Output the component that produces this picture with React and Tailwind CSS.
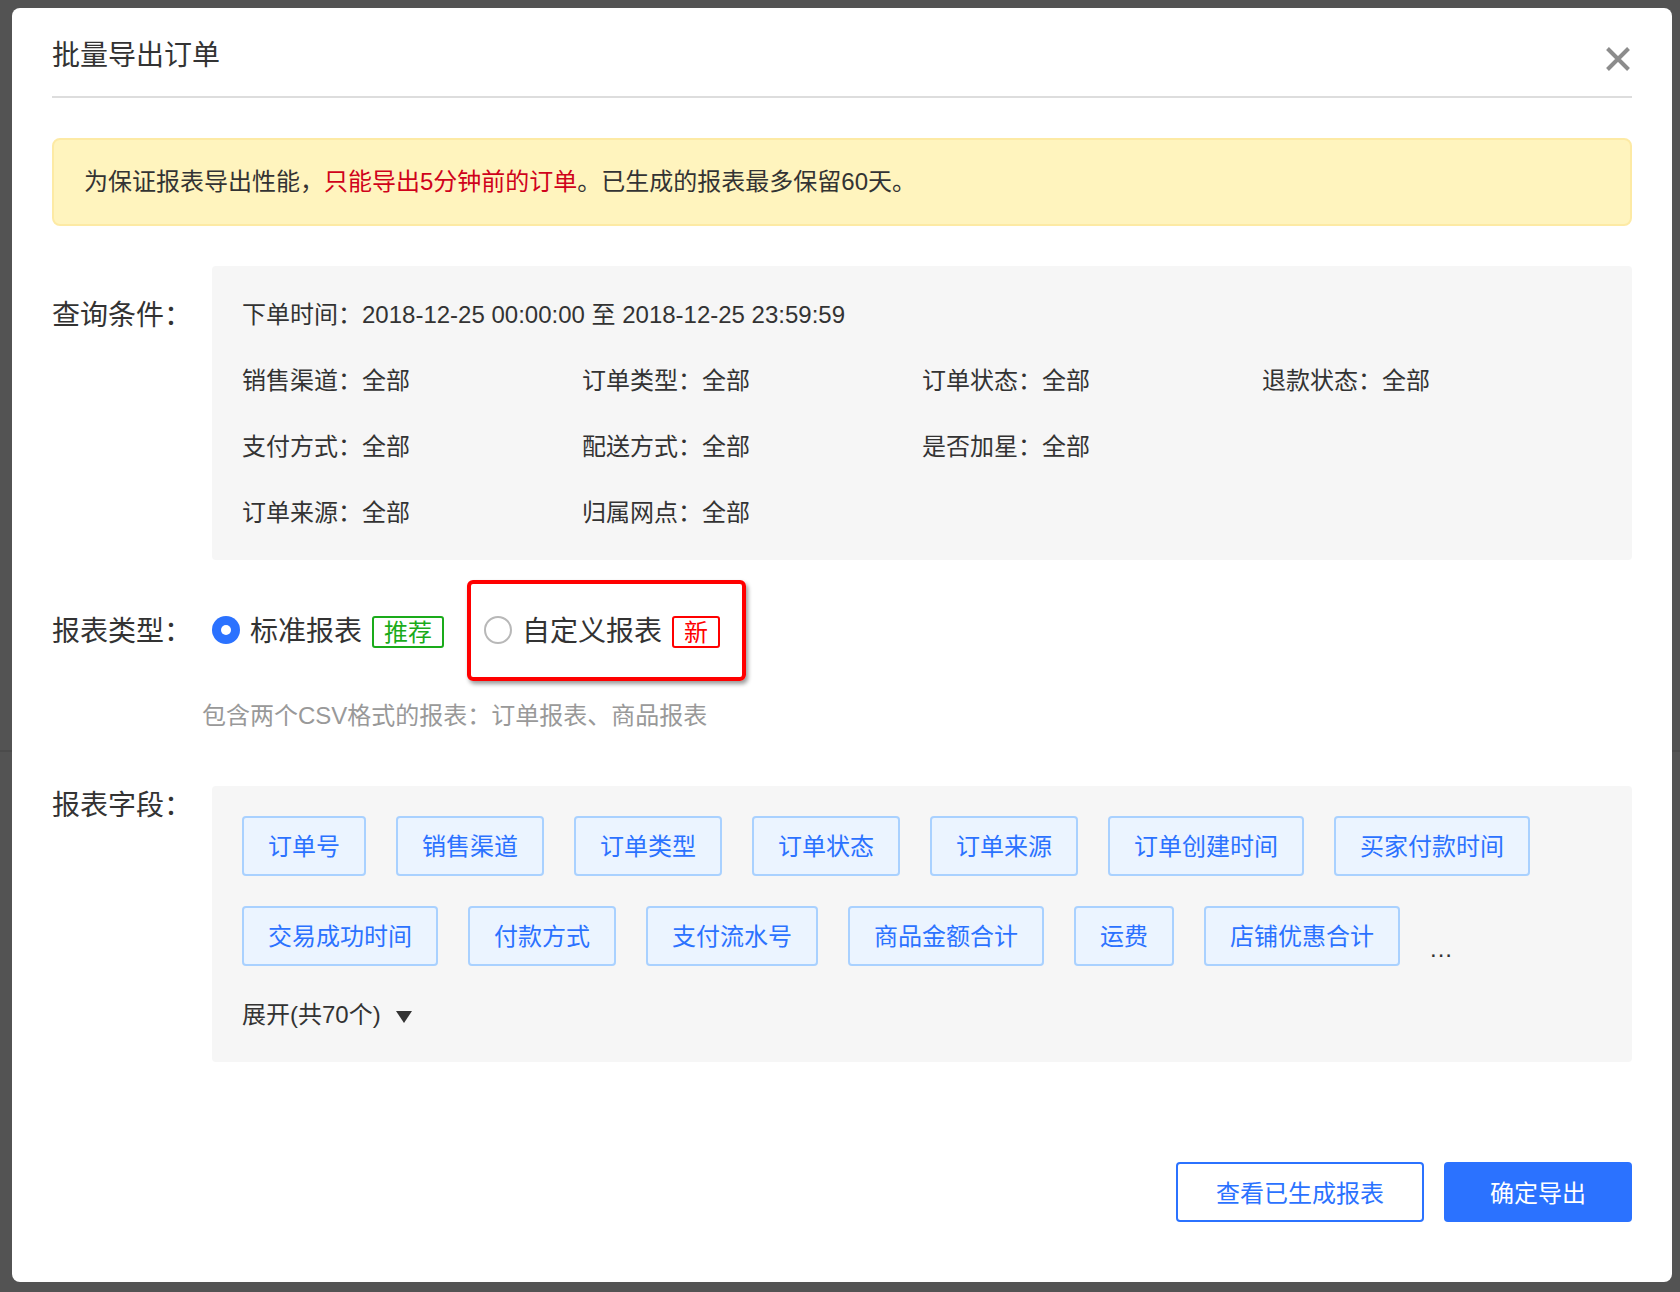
const blue = "border-[#a9d1ff]";

function Chip({ children }) {
  return (
    <span className={`h-[60px] px-[24px] pt-[2px] flex items-center border-2 ${blue} bg-[#ebf4ff] rounded text-[#2b72ff] text-[24px]`}>
      {children}
    </span>
  );
}

function Field({ label, value = "全部" }) {
  return <div className="leading-[36px] whitespace-nowrap">{label}：{value}</div>;
}

const row1 = ["订单号", "销售渠道", "订单类型", "订单状态", "订单来源", "订单创建时间", "买家付款时间"];
const row2 = ["交易成功时间", "付款方式", "支付流水号", "商品金额合计", "运费", "店铺优惠合计"];

export default function App() {
  return (
    <div className="relative w-[1680px] h-[1292px] bg-[#535353] pl-[12px] pr-[8px] pt-[8px] pb-[10px] font-['Liberation_Sans','Noto_Sans_CJK_SC',sans-serif] text-[#333333]">
      {/* faint line of the page behind the mask */}
      <div className="absolute left-0 top-[750px] w-full h-[2px] bg-[#4b4b4b]" />
      <div className="relative h-full bg-white rounded-lg px-[40px]">
        <div className="h-[90px] border-b-2 border-[#dddddd] flex justify-between items-start pt-[28px]">
          <div className="text-[28px] leading-[40px]">批量导出订单</div>
          <svg className="mt-[11px] mr-[2px]" width="24" height="24" viewBox="0 0 24 24" fill="none" stroke="#8c8c8c" strokeWidth="4">
            <path d="M1.5 1.5 22.5 22.5M22.5 1.5 1.5 22.5" />
          </svg>
        </div>

        <div className="mt-[40px] h-[88px] bg-[#fff4be] border-2 border-[#fdeaa4] rounded-lg px-[30px] flex items-center text-[24px]">
          为保证报表导出性能，<span className="text-[#d0021b]">只能导出5分钟前的订单</span>。已生成的报表最多保留60天。
        </div>

        <div className="mt-[40px] flex">
          <div className="w-[160px] shrink-0 pt-[33px] text-[28px] leading-[34px]">查询条件：</div>
          <div className="flex-1 bg-[#f6f6f6] rounded px-[30px] pt-[31px] pb-[29px] text-[24px] grid grid-cols-4 gap-y-[30px]">
            <div className="col-span-4"><Field label="下单时间" value="2018-12-25 00:00:00 至 2018-12-25 23:59:59" /></div>
            <Field label="销售渠道" />
            <Field label="订单类型" />
            <Field label="订单状态" />
            <Field label="退款状态" />
            <Field label="支付方式" />
            <Field label="配送方式" />
            <Field label="是否加星" />
            <div />
            <Field label="订单来源" />
            <Field label="归属网点" />
          </div>
        </div>

        <div className="mt-[20px] flex items-start">
          <div className="w-[160px] shrink-0 mt-[35px] text-[28px] leading-[34px]">报表类型：</div>
          <div className="mt-[30px] h-[40px] flex items-center">
            <span className="size-[28px] rounded-full bg-[#2b72ff] flex items-center justify-center">
              <span className="size-[10px] rounded-full bg-white" />
            </span>
            <span className="ml-[10px] mt-[4px] text-[28px]">标准报表</span>
            <span className="ml-[10px] mt-1 pt-[2px] w-[72px] h-[32px] border-2 border-[#1aab1a] rounded-[3px] text-[#1aab1a] text-[24px] flex items-center justify-center">推荐</span>
          </div>
          <div className="ml-[23px] w-[279px] h-[101px] border-4 border-[#ff0000] rounded-md shadow-[2px_3px_4px_rgba(0,0,0,0.4)] pl-[13px] pt-[26px]">
            <div className="h-[40px] flex items-center">
              <span className="size-[28px] rounded-full border-2 border-[#b8b8b8]" />
              <span className="ml-[10px] mt-[4px] text-[28px]">自定义报表</span>
              <span className="ml-[10px] mt-1 pt-[2px] w-[48px] h-[32px] border-2 border-[#ff0000] rounded-[3px] text-[#ff0000] text-[24px] flex items-center justify-center">新</span>
            </div>
          </div>
        </div>

        <div className="mt-[17px] ml-[150px] text-[24px] leading-[36px] text-[#999999]">包含两个CSV格式的报表：订单报表、商品报表</div>

        <div className="mt-[52px] flex">
          <div className="w-[160px] shrink-0 pt-[3px] text-[28px] leading-[34px]">报表字段：</div>
          <div className="flex-1 h-[276px] bg-[#f6f6f6] rounded pt-[30px] px-[30px]">
            <div className="flex gap-[30px]">
              {row1.map((t) => <Chip key={t}>{t}</Chip>)}
            </div>
            <div className="mt-[30px] flex gap-[30px]">
              {row2.map((t) => <Chip key={t}>{t}</Chip>)}
              <span className="self-end text-[24px] leading-[36px] -mb-[1px] tracking-[1px]">...</span>
            </div>
            <div className="mt-[31px] flex items-center text-[24px] leading-[36px]">
              展开(共70个)
              <svg className="ml-[15px] mt-[4px]" width="16" height="12" viewBox="0 0 16 12" fill="#333333">
                <path d="M0 0H16L8 12Z" />
              </svg>
            </div>
          </div>
        </div>

        <div className="mt-[100px] flex justify-end gap-[20px] text-[24px]">
          <button className="w-[248px] h-[60px] pt-[4px] border-2 border-[#2b72ff] rounded text-[#2b72ff]">查看已生成报表</button>
          <button className="w-[188px] h-[60px] pt-[4px] bg-[#2b72ff] rounded text-white">确定导出</button>
        </div>
      </div>
    </div>
  );
}
